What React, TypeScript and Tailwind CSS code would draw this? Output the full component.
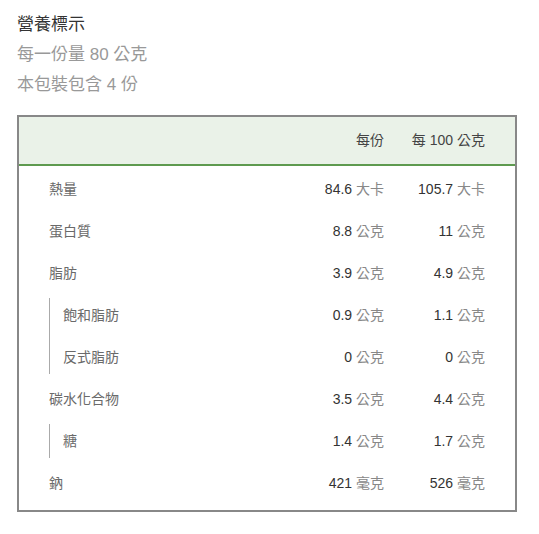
import React from 'react'

interface Row {
  name: string
  perServing: [string, string]
  per100: [string, string]
}

interface Group {
  rows: Row[]
  sub?: boolean
}

const groups: Group[] = [
  { rows: [{ name: '熱量', perServing: ['84.6', '大卡'], per100: ['105.7', '大卡'] }] },
  { rows: [{ name: '蛋白質', perServing: ['8.8', '公克'], per100: ['11', '公克'] }] },
  { rows: [{ name: '脂肪', perServing: ['3.9', '公克'], per100: ['4.9', '公克'] }] },
  {
    sub: true,
    rows: [
      { name: '飽和脂肪', perServing: ['0.9', '公克'], per100: ['1.1', '公克'] },
      { name: '反式脂肪', perServing: ['0', '公克'], per100: ['0', '公克'] },
    ],
  },
  { rows: [{ name: '碳水化合物', perServing: ['3.5', '公克'], per100: ['4.4', '公克'] }] },
  { sub: true, rows: [{ name: '糖', perServing: ['1.4', '公克'], per100: ['1.7', '公克'] }] },
  { rows: [{ name: '鈉', perServing: ['421', '毫克'], per100: ['526', '毫克'] }] },
]

function Value({ v }: { v: [string, string] }) {
  return (
    <span className="whitespace-nowrap">
      <span className="text-[#333]">{v[0]}</span>{' '}
      <span className="text-[#888]">{v[1]}</span>
    </span>
  )
}

function RowLine({ row }: { row: Row }) {
  return (
    <div className="flex items-center h-[42px]">
      <div className="flex-1 text-[#6a6a6a]">{row.name}</div>
      <div className="text-right">
        <Value v={row.perServing} />
      </div>
      <div className="w-[101px] text-right">
        <Value v={row.per100} />
      </div>
    </div>
  )
}

export default function App() {
  return (
    <div
      className="w-[539px] h-[534px] bg-white pl-[17px] pt-[14px]"
      style={{ fontFamily: '"Liberation Sans", "Noto Sans CJK TC", sans-serif' }}
    >
      {/* Heading */}
      <div className="text-[17px] leading-[22px] text-[#333]">營養標示</div>
      <div className="mt-[8px] text-[17px] leading-[22px] text-[#999]">每一份量 80 公克</div>
      <div className="mt-[8px] text-[17px] leading-[22px] text-[#999]">本包裝包含 4 份</div>

      {/* Table */}
      <div className="mt-[19px] w-[500px] border-2 border-[#888] text-[14px]">
        <div className="flex items-center h-[49px] bg-[#eaf2e8] border-b-2 border-[#5e9a4f] pr-[30px] text-[#444]">
          <div className="flex-1" />
          <div className="text-right">每份</div>
          <div className="w-[101px] text-right">每 100 公克</div>
        </div>

        <div className="pt-[2px] pb-[6px] pl-[30px] pr-[30px]">
          {groups.map((g, i) =>
            g.sub ? (
              <div key={i} className="flex">
                <div className="w-px my-[4px] bg-[#aaa]" />
                <div className="flex-1 pl-[13px]">
                  {g.rows.map((r) => (
                    <RowLine key={r.name} row={r} />
                  ))}
                </div>
              </div>
            ) : (
              <RowLine key={i} row={g.rows[0]} />
            ),
          )}
        </div>
      </div>
    </div>
  )
}
